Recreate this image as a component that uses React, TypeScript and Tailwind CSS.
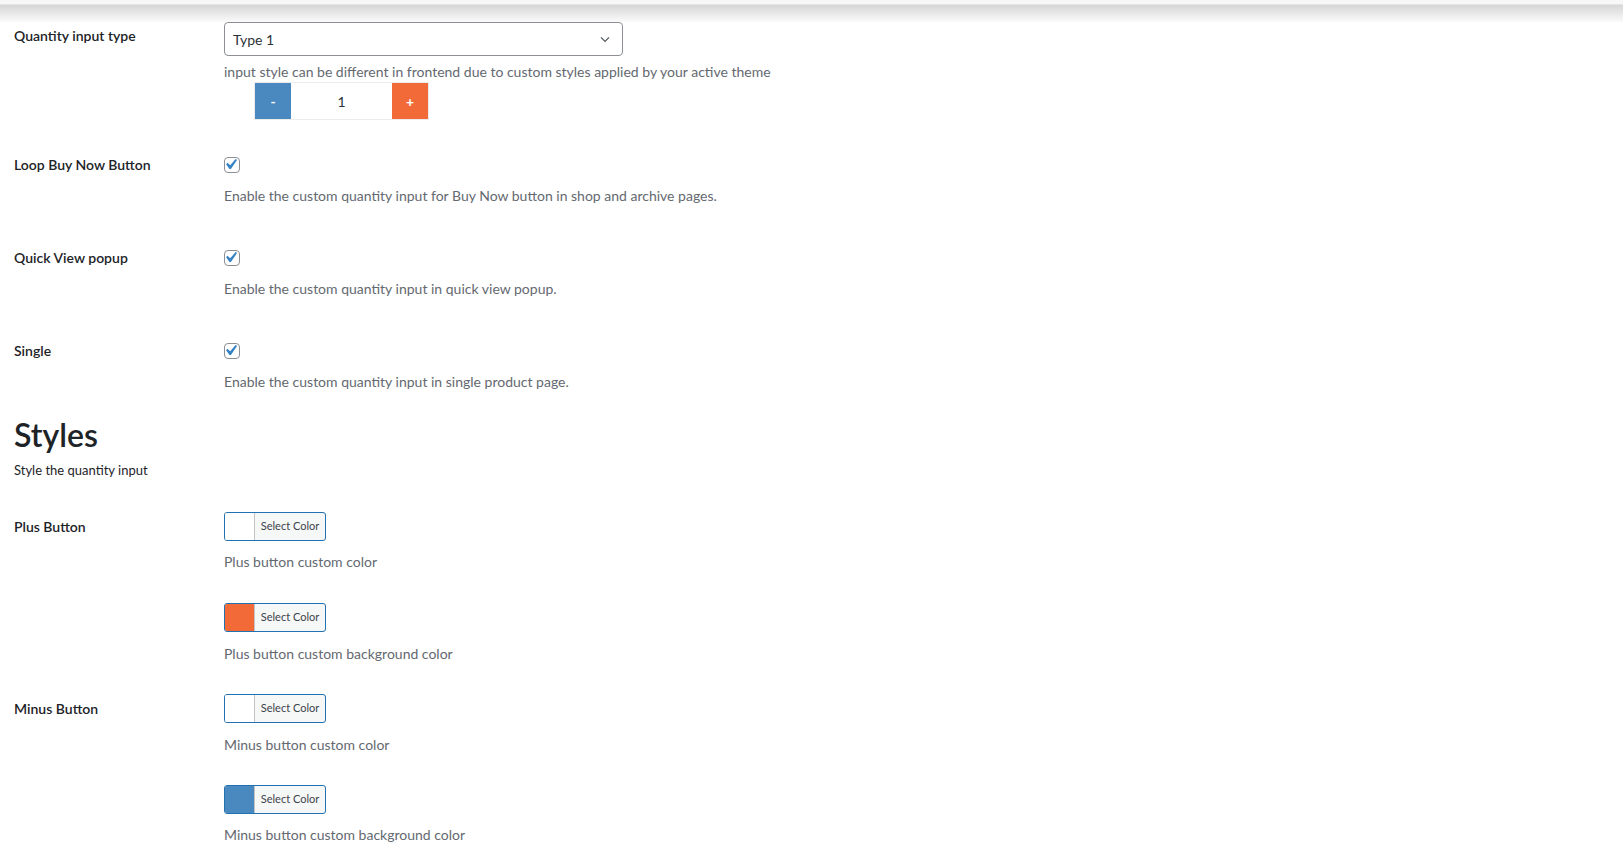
import React from "react";

const labelCls = "w-[210px] shrink-0 text-[14px] font-semibold text-[#1d2327]";
const descCls = "text-[14px] leading-[20px] text-[#646970]";

function CheckMark() {
  return (
    <span className="relative block h-4 w-4 rounded-[4px] border border-[#8c8f94] bg-white">
      <svg className="absolute -inset-px h-4 w-4" viewBox="3.8 2.9 15.2 15.2">
        <path
          d="M14.83 4.89l1.34.94-5.81 8.38H9.02L5.78 9.67l1.34-1.25 2.57 2.4z"
          fill="#3582c4"
        />
      </svg>
    </span>
  );
}

function ColorButton({ swatch }: { swatch: string }) {
  return (
    <button className="flex h-[29px] w-[102px] overflow-hidden rounded-[3px] border border-[#2271b1] bg-[#f6f7f7]">
      <span className={`h-full w-[30px] border-r border-[#c3c4c7] ${swatch}`} />
      <span className="flex h-full flex-1 items-center justify-center text-[11px] text-[#3c434a]">
        Select Color
      </span>
    </button>
  );
}

function CheckRow({ label, desc, gap }: { label: string; desc: string; gap: string }) {
  return (
    <div className={`flex ${gap}`}>
      <div className={`${labelCls} leading-[16px]`}>{label}</div>
      <div>
        <CheckMark />
        <p className={`${descCls} mt-[13px]`}>{desc}</p>
      </div>
    </div>
  );
}

export default function App() {
  return (
    <div className="min-h-screen bg-white font-['Lato','Noto_Sans',sans-serif]">
      {/* shadow cast by the admin header above */}
      <div className="h-[22px] bg-[linear-gradient(to_bottom,#f7f7f7_0px,#f7f7f7_4px,#d6d6d6_5px,#ffffff_24px)]" />

      <div className="px-[14px] pb-10">
        {/* quantity input type */}
        <div className="flex">
          <div className={`${labelCls} pt-[5px] leading-[18px]`}>Quantity input type</div>
          <div>
            <div className="flex h-[34px] w-[399px] items-center justify-between rounded-[4px] border border-[#8c8f94] pl-[8px] pr-[8px]">
              <span className="text-[14px] text-[#2c3338]">Type 1</span>
              <svg width="16" height="16" viewBox="0 0 20 20" className="mr-[1px]">
                <path d="M5 8l5 5 5-5" fill="none" stroke="#50575e" strokeWidth="1.6" />
              </svg>
            </div>
            <p className={`${descCls} mt-[6px]`}>
              input style can be different in frontend due to custom styles applied by your active theme
            </p>
            <div className="ml-[30px] flex h-[38px] w-[175px] border border-[#ececec]">
              <span className="flex w-[36px] items-center justify-center bg-[#4a88c0] text-[14px] font-bold text-white">
                -
              </span>
              <span className="flex flex-1 items-center justify-center text-[14px] text-[#2c3338]">1</span>
              <span className="flex w-[36px] items-center justify-center bg-[#f26a37] text-[14px] font-bold text-white">
                +
              </span>
            </div>
          </div>
        </div>

        <CheckRow
          gap="mt-[37px]"
          label="Loop Buy Now Button"
          desc="Enable the custom quantity input for Buy Now button in shop and archive pages."
        />
        <CheckRow
          gap="mt-[44px]"
          label="Quick View popup"
          desc="Enable the custom quantity input in quick view popup."
        />
        <CheckRow
          gap="mt-[44px]"
          label="Single"
          desc="Enable the custom quantity input in single product page."
        />

        {/* styles section */}
        <h2 className="mt-[23px] text-[32px] font-semibold leading-[40px] text-[#1d2327]">Styles</h2>
        <p className="mt-[5px] text-[13px] leading-[20px] text-[#1d2327]">Style the quantity input</p>

        <div className="mt-[32px] flex">
          <div className={`${labelCls} leading-[29px]`}>Plus Button</div>
          <div>
            <ColorButton swatch="bg-white" />
            <p className={`${descCls} mt-[11px]`}>Plus button custom color</p>
            <div className="mt-[31px]">
              <ColorButton swatch="bg-[#f26a37]" />
            </div>
            <p className={`${descCls} mt-[12px]`}>Plus button custom background color</p>
          </div>
        </div>

        <div className="mt-[30px] flex">
          <div className={`${labelCls} leading-[29px]`}>Minus Button</div>
          <div>
            <ColorButton swatch="bg-white" />
            <p className={`${descCls} mt-[12px]`}>Minus button custom color</p>
            <div className="mt-[30px]">
              <ColorButton swatch="bg-[#4a88c0]" />
            </div>
            <p className={`${descCls} mt-[11px]`}>Minus button custom background color</p>
          </div>
        </div>
      </div>
    </div>
  );
}
